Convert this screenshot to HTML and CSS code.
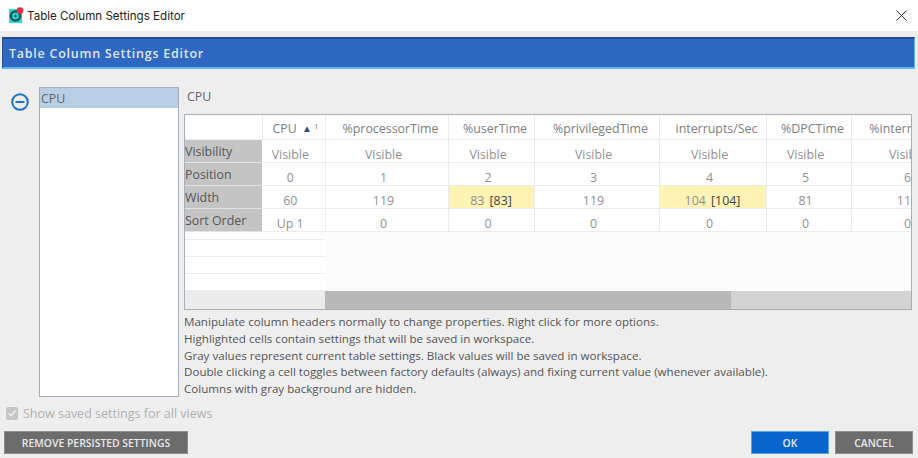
FILE: index.html
```html
<!DOCTYPE html>
<html lang="en">
<head>
<meta charset="utf-8">
<title>Table Column Settings Editor</title>
<link rel="stylesheet" href="styles.css">
</head>
<body>
<div class="window">
  <header class="titlebar">
    <svg class="app-icon" width="15" height="16" viewBox="0 0 15 16">
      <rect x="0" y="2" width="13" height="14" fill="#1fe0c4"/>
      <circle cx="6.5" cy="9" r="4.6" fill="none" stroke="#0f4a63" stroke-width="2.4"/>
      <circle cx="6.5" cy="9" r="1.2" fill="#0f4a63"/>
      <circle cx="11" cy="3.6" r="3.4" fill="#ea2b45"/>
    </svg>
    <span class="title-text">Table Column Settings Editor</span>
    <svg class="close-icon" width="11" height="11" viewBox="0 0 11 11">
      <path d="M.5.5l10 10M10.5.5l-10 10" fill="none" stroke="#333" stroke-width="1"/>
    </svg>
  </header>
  <div class="banner">Table Column Settings Editor</div>
  <main class="content">
    <div class="tool-col">
      <svg class="minus-icon" width="18" height="18" viewBox="0 0 18 18">
        <circle cx="9" cy="9" r="7.8" fill="none" stroke="#1f72c9" stroke-width="2"/>
        <rect x="4.5" y="8" width="9" height="2" fill="#1f72c9"/>
      </svg>
    </div>
    <div class="list"><div class="list-item">CPU</div></div>
    <section class="detail">
      <div class="detail-title">CPU</div>
      <div class="table-frame">
        <table class="grid">
          <colgroup>
            <col class="c-head"><col class="c-cpu"><col class="c-proc"><col class="c-user"><col class="c-priv"><col class="c-int"><col class="c-dpc"><col class="c-last">
          </colgroup>
          <thead>
            <tr>
              <th class="corner"></th>
              <th class="th-cpu">CPU <span class="sort">▲</span><sup class="sort-n">1</sup></th>
              <th>%processorTime</th><th>%userTime</th><th>%privilegedTime</th><th>interrupts/Sec</th><th>%DPCTime</th><th>%interruptTime</th>
            </tr>
          </thead>
          <tbody>
            <tr><th>Visibility</th><td>Visible</td><td>Visible</td><td>Visible</td><td>Visible</td><td>Visible</td><td>Visible</td><td>Visible</td></tr>
            <tr><th>Position</th><td>0</td><td>1</td><td>2</td><td>3</td><td>4</td><td>5</td><td>6</td></tr>
            <tr><th>Width</th><td>60</td><td>119</td><td class="hl">83 <b>[83]</b></td><td>119</td><td class="hl">104 <b>[104]</b></td><td>81</td><td>119</td></tr>
            <tr><th>Sort Order</th><td>Up 1</td><td>0</td><td>0</td><td>0</td><td>0</td><td>0</td><td>0</td></tr>
          </tbody>
        </table>
        <div class="filler"><div></div><div></div><div></div></div>
        <div class="hscroll">
          <div class="scroll-corner"></div>
          <div class="scroll-track"><div class="scroll-thumb"></div></div>
        </div>
      </div>
      <div class="help">
        <p>Manipulate column headers normally to change properties. Right click for more options.</p>
        <p>Highlighted cells contain settings that will be saved in workspace.</p>
        <p>Gray values represent current table settings. Black values will be saved in workspace.</p>
        <p>Double clicking a cell toggles between factory defaults (always) and fixing current value (whenever available).</p>
        <p>Columns with gray background are hidden.</p>
      </div>
    </section>
  </main>
  <label class="check-row">
    <span class="check"><svg width="12" height="12" viewBox="0 0 12 12"><path d="M2.5 6.2l2.5 2.6 4.5-5.4" fill="none" stroke="#eee" stroke-width="1.6"/></svg></span>
    <span>Show saved settings for all views</span>
  </label>
  <footer class="actions">
    <button class="btn btn-gray btn-remove">REMOVE PERSISTED SETTINGS</button>
    <span class="spacer"></span>
    <button class="btn btn-blue btn-small">OK</button>
    <button class="btn btn-gray btn-small">CANCEL</button>
  </footer>
</div>
</body>
</html>
```

FILE: styles.css
```css
* { box-sizing: border-box; }
html, body { margin: 0; padding: 0; }
body {
  width: 918px;
  height: 458px;
  overflow: hidden;
  background: #eeeeee;
  font-family: "Open Sans", "Noto Sans", sans-serif;
  font-size: 12.4px;
  color: #555;
}
.window { display: flex; flex-direction: column; height: 458px; }

.titlebar {
  height: 31px;
  background: #fff;
  display: flex;
  align-items: center;
  padding: 0 11px 0 9px;
  flex: none;
}
.app-icon { flex: none; margin-right: 3px; margin-top: -1px; }
.title-text {
  font-family: "Inter", "Liberation Sans", sans-serif;
  font-size: 11.6px;
  color: #222;
  flex: 1;
}
.close-icon { flex: none; }

.banner {
  flex: none;
  margin: 6px 3px 0 2px;
  height: 32px;
  background: #2f68c3;
  border-top: 2px solid #254d8e;
  border-left: 1px solid #254d8e;
  border-right: 1px solid #5cb8f5;
  border-bottom: 2px solid #5cb8f5;
  color: #dfe6f2;
  font-weight: 600;
  font-size: 12.5px;
  letter-spacing: 0.75px;
  line-height: 30px;
  padding-left: 6px;
}

.content {
  flex: none;
  display: flex;
  height: 309px;
  margin-top: 18px;
  align-items: flex-start;
}
.tool-col { width: 39px; flex: none; padding: 6px 0 0 11px; }
.minus-icon { display: block; }
.list {
  width: 140px;
  height: 310px;
  flex: none;
  background: #fff;
  border: 1px solid #a5aeb8;
}
.list-item {
  height: 20px;
  background: #b8cee5;
  padding: 1px 0 0 1px;
  line-height: 20px;
  color: #666;
}

.detail { width: 728px; margin-left: 5px; flex: none; }
.detail-title { height: 27px; padding: 1px 0 0 3px; line-height: 18px; color: #666; }

.table-frame {
  width: 728px;
  height: 196px;
  background: #fcfcfc;
  border: 1px solid #a8adb8;
  display: flex;
  flex-direction: column;
  overflow: hidden;
}
.grid {
  border-collapse: collapse;
  table-layout: fixed;
  width: 785px;
  flex: none;
  background: #fff;
}
.c-head { width: 77px; }
.c-cpu { width: 63px; }
.c-proc { width: 123px; }
.c-user { width: 86px; }
.c-priv { width: 125px; }
.c-int { width: 107px; }
.c-dpc { width: 85px; }
.c-last { width: 119px; }
.grid thead th {
  height: 24px;
  font-weight: 400;
  color: #7d7d7d;
  border-right: 1px solid #ececec;
  border-bottom: 1px solid #ececec;
  padding: 3px 0 0 8px;
  white-space: nowrap;
  overflow: hidden;
  text-align: center;
}
.grid thead th.corner { background: #fff; }
.grid thead th.th-cpu { padding-left: 4px; }
.sort { font-size: 10px; color: #2d4f72; vertical-align: 1px; margin: 0 2px; }
.sort-n { font-size: 8px; line-height: 0; vertical-align: 4px; }
.grid tbody th {
  height: 23px;
  background: #c4c4c4;
  font-weight: 400;
  color: #555;
  text-align: left;
  padding: 2px 0 0 0;
  border-bottom: 1px solid #e4e4e4;
  white-space: nowrap;
}
.grid td {
  height: 23px;
  padding: 8px 6px 0 0;
  line-height: 14px;
  text-align: center;
  color: #909090;
  border-right: 1px solid #ececec;
  border-bottom: 1px solid #ececec;
  white-space: nowrap;
  overflow: hidden;
}
.grid td.hl { background: #fdf3b4; padding-right: 0; }
.grid td.hl b { font-weight: 400; color: #444; margin-left: 2px; }

.filler { flex: 1; width: 140px; padding-top: 7px; }
.filler div { height: 18px; background: #fff; border-top: 1px solid #ececec; border-bottom: 1px solid #ececec; margin-bottom: -1px; }

.hscroll { flex: none; height: 18px; display: flex; }
.scroll-corner { width: 140px; background: #ececec; flex: none; }
.scroll-track { flex: 1; background: #d3d3d3; }
.scroll-thumb { width: 406px; height: 100%; background: #b8b8b8; }

.help { margin-top: 4px; }
.help p { margin: 0; height: 16.75px; line-height: 16.75px; color: #555; white-space: nowrap; font-size: 11.6px; }

.check-row {
  flex: none;
  display: flex;
  align-items: center;
  height: 18px;
  margin: 8px 0 0 6px;
  gap: 5px;
  font-size: 12.5px;
  color: #b0b0b0;
}
.check { width: 12px; height: 13px; background: #c6c6c6; border-radius: 2px; display: flex; align-items: center; }
.check svg { display: block; }

.actions {
  flex: none;
  display: flex;
  height: 23px;
  margin-top: 9px;
  padding: 0 5px 0 4px;
  gap: 6px;
}
.spacer { flex: 1; }
.btn {
  border: 1px solid #8e8e8e;
  font-family: inherit;
  font-size: 10.4px;
  font-weight: 600;
  color: #e8e8e8;
  padding: 0;
  height: 23px;
}
.btn-gray { background: #6c6c6c; }
.btn-blue { background: #0a66cf; border-color: #5da2e5; }
.btn-remove { width: 184px; }
.btn-small { width: 78px; }
```
